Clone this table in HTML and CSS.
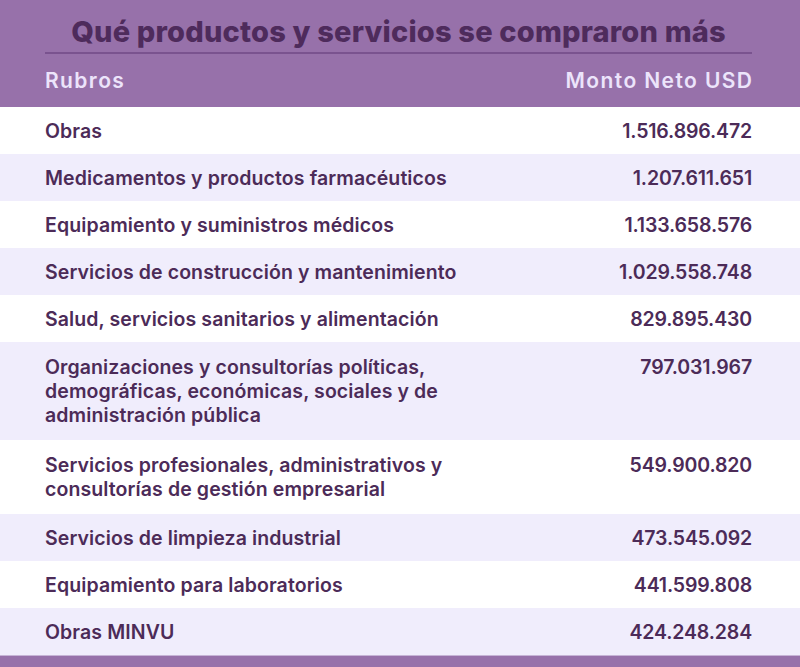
FILE: index.html
```html
<!DOCTYPE html>
<html lang="es">
<head>
<meta charset="utf-8">
<title>Qué productos y servicios se compraron más</title>
<link rel="stylesheet" href="styles.css">
</head>
<body>
<div class="page">
  <header class="head">
    <h1 class="title">Qué productos y servicios se compraron más</h1>
    <div class="cols">
      <span>Rubros</span>
      <span>Monto Neto USD</span>
    </div>
  </header>
  <div class="rows">
    <div class="row"><span class="name">Obras</span><span class="amt">1.516.896.472</span></div>
    <div class="row alt"><span class="name">Medicamentos y productos farmacéuticos</span><span class="amt">1.207.611.651</span></div>
    <div class="row"><span class="name">Equipamiento y suministros médicos</span><span class="amt">1.133.658.576</span></div>
    <div class="row alt"><span class="name">Servicios de construcción y mantenimiento</span><span class="amt">1.029.558.748</span></div>
    <div class="row"><span class="name">Salud, servicios sanitarios y alimentación</span><span class="amt">829.895.430</span></div>
    <div class="row alt multi"><span class="name">Organizaciones y consultorías políticas,<br>demográficas, económicas, sociales y de<br>administración pública</span><span class="amt">797.031.967</span></div>
    <div class="row multi"><span class="name">Servicios profesionales, administrativos y<br>consultorías de gestión empresarial</span><span class="amt">549.900.820</span></div>
    <div class="row alt"><span class="name">Servicios de limpieza industrial</span><span class="amt">473.545.092</span></div>
    <div class="row"><span class="name">Equipamiento para laboratorios</span><span class="amt">441.599.808</span></div>
    <div class="row alt"><span class="name">Obras MINVU</span><span class="amt">424.248.284</span></div>
  </div>
  <div class="foot"></div>
</div>
</body>
</html>
```
FILE: styles.css
```css
html, body {
  margin: 0;
  padding: 0;
  background: #ffffff;
}
body {
  font-family: Inter, "Noto Sans", sans-serif;
  color: #4c2b58;
}
.page {
  width: 800px;
  display: flex;
  flex-direction: column;
}
.head {
  background: #9771aa;
  padding: 0 48px 0 45px;
  height: 107px;
  box-sizing: border-box;
  display: flex;
  flex-direction: column;
}
.title {
  margin: 0;
  height: 54px;
  box-sizing: border-box;
  padding-top: 15px;
  border-bottom: 2px solid #7a538f;
  font-size: 29px;
  line-height: 34px;
  font-weight: 800;
  color: #4e2b5c;
  text-align: center;
  letter-spacing: 0.2px;
}
.cols {
  display: flex;
  justify-content: space-between;
  padding-top: 15px;
  font-size: 21px;
  line-height: 24px;
  font-weight: 600;
  letter-spacing: 1.4px;
  color: #ece4fb;
}
.cols span:last-child {
  margin-right: -1.4px;
}
.rows {
  display: flex;
  flex-direction: column;
}
.row {
  display: flex;
  justify-content: space-between;
  align-items: flex-start;
  padding: 11.5px 48px 11.5px 45px;
  font-size: 19.5px;
  line-height: 24px;
  font-weight: 600;
  letter-spacing: 0.1px;
  background: #ffffff;
}
.row.multi {
  padding-top: 13px;
  padding-bottom: 13px;
}
.row .amt {
  letter-spacing: -0.15px;
}
.row.alt {
  background: #f0edfc;
}
.foot {
  height: 12px;
  background: #9771aa;
  border-top: 1px solid #c6b4d6;
}
```
